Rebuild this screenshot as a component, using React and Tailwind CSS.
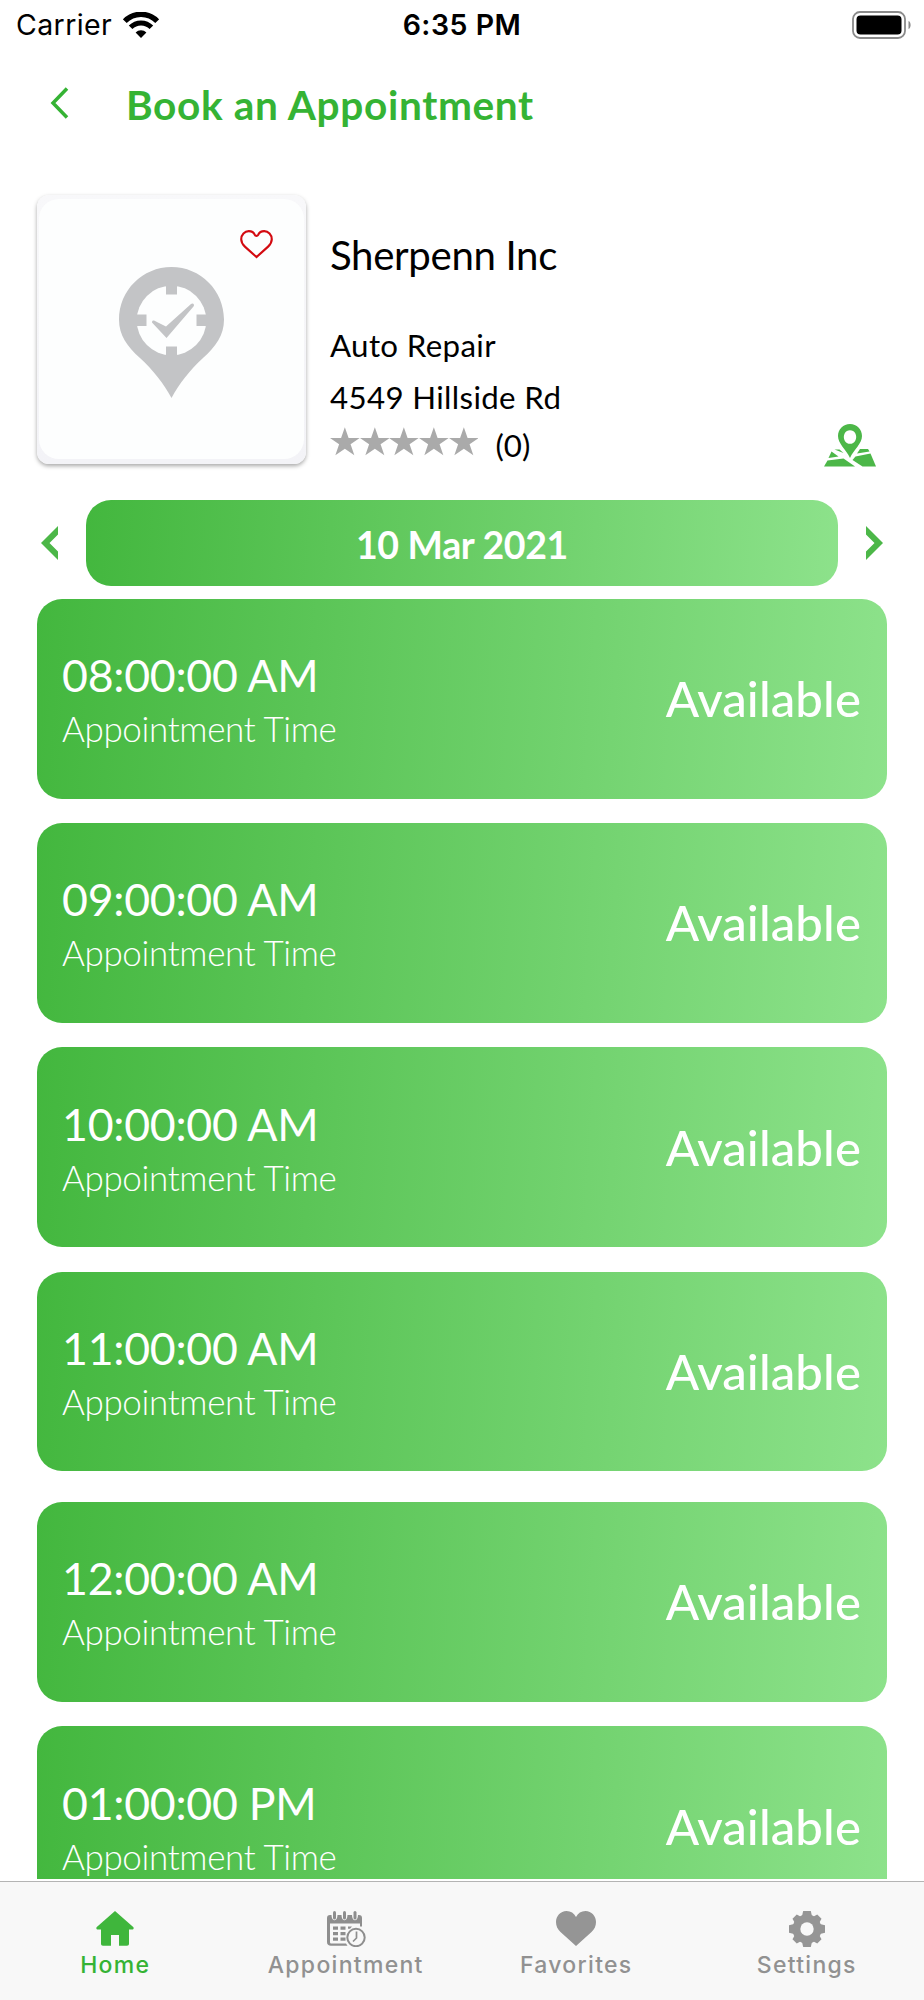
import React from 'react'

const slots = [
    { time: '08:00:00 AM', gap: 'mb-[24.7px]' },
    { time: '09:00:00 AM', gap: 'mb-[24.7px]' },
    { time: '10:00:00 AM', gap: 'mb-[24.7px]' },
    { time: '11:00:00 AM', gap: 'mb-[31px]' },
    { time: '12:00:00 AM', gap: 'mb-[24.7px]' },
    { time: '01:00:00 PM', gap: '' },
]

const WifiIcon = () => (
    <svg className="w-9 h-[27px]" viewBox="0 0 36 27" fill="none" stroke="#000">
        <path d="M1.8 9.2 A22.5 22.5 0 0 1 34.2 9.2" strokeWidth="5.4" />
        <path d="M7.6 15.3 A14.5 14.5 0 0 1 28.4 15.3" strokeWidth="5" />
        <path d="M18 26 L12.6 20.6 A7.6 7.6 0 0 1 23.4 20.6 Z" fill="#000" stroke="none" />
    </svg>
)

const BatteryIcon = () => (
    <svg className="w-[60px] h-7" viewBox="0 0 60 28">
        <rect x="1" y="1" width="52" height="26" rx="7" fill="none" stroke="#8a8a8a" strokeWidth="1.8" />
        <rect x="4.5" y="4.6" width="45" height="18.8" rx="4" fill="#000" />
        <path d="M56.5 10 C59.3 11 59.3 17 56.5 18 Z" fill="#8a8a8a" />
    </svg>
)

const PinLogo = () => (
    <svg className="w-[105px] h-[131px]" viewBox="0 0 105 131">
        <path
            d="M52.5 0 C81.5 0 105 23.5 105 52.5 C105 68 97 79.5 84 91 C71 103 60 117 52.5 131 C45 117 34 103 21 91 C8 79.5 0 68 0 52.5 C0 23.5 23.5 0 52.5 0 Z"
            fill="#c3c4c6"
        />
        <circle cx="52.5" cy="53.5" r="34.8" fill="#fdfefe" />
        <path d="M47 17h11v10.5H47z M47 79.5h11V90H47z M17 47.5h10.5v11.5H17z M77.5 47.5H88v11.5H77.5z" fill="#c3c4c6" />
        <path d="M33 55.5 C33 53 35 53 37 54.5 L47 59.5 L72 37 C74 35.5 76 37.5 74.5 39.5 L47.5 71 Z" fill="#c3c4c6" />
    </svg>
)

const HeartOutline = () => (
    <svg className="w-[33px] h-[29px]" viewBox="0 0 34 30" fill="none" stroke="#d30a10" strokeWidth="2.2">
        <path d="M17 28 L5 17.2 C2.2 14.6 1.2 12.4 1.2 9.6 C1.2 4.8 4.8 1.2 9 1.2 C12.2 1.2 14.2 2.6 15.4 5.2 C16 6.4 18 6.4 18.6 5.2 C19.8 2.6 21.8 1.2 25 1.2 C29.2 1.2 32.8 4.8 32.8 9.6 C32.8 12.4 31.8 14.6 29 17.2 Z" />
    </svg>
)

const Star = () => (
    <svg className="w-[29.7px] h-[28.5px]" viewBox="0 0 30 28.5" fill="#aaaaaa">
        <path d="M15 0 L18.8 11 H30 L20.8 17.4 L24.6 28.5 L15 21.8 L5.4 28.5 L9.2 17.4 L0 11 H11.2 Z" />
    </svg>
)

const MapIcon = () => (
    <svg className="w-[52px] h-[43px]" viewBox="0 0 52 43" fill="#4cb748">
        <path
            fillRule="evenodd"
            d="M26 0 C32.8 0 38 5.2 38 12 C38 20 30 25 26 34 C22 25 14 20 14 12 C14 5.2 19.2 0 26 0 Z M26 6.2 a6.2 6.8 0 1 0 0.01 0 Z"
        />
        <path d="M10.5 25.5 H15.5 L19.5 29 Z" />
        <path d="M7.5 27.5 L14.5 32.5 L4.5 34 Z" />
        <path d="M3.5 36.5 L19.5 34.5 L31 42.5 H0 Z" />
        <path d="M36 25 H44 L45.5 27.5 L33 29.5 Z" />
        <path d="M31.5 32.5 L46.5 29.5 L52 42.5 H38.5 L28.5 36 Z" />
    </svg>
)

const HomeIcon = () => (
    <svg className="w-[38px] h-[35px]" viewBox="0 0 38 35" fill="#3fb63c">
        <path d="M19 0 L37.2 16 C38.2 17.2 37.5 18.5 36 18.5 H33 V32.5 C33 34 32.3 34.7 31 34.7 H23 V24 H15 V34.7 H7 C5.7 34.7 5 34 5 32.5 V18.5 H2 C0.5 18.5 -0.2 17.2 0.8 16 Z" />
    </svg>
)

const CalendarIcon = () => (
    <svg className="w-[39px] h-9 ml-[2px]" viewBox="0 0 39 36" fill="#8e8e8e">
        <path d="M3 4 H4.5 C4.5 11 10.5 11 10.5 4 H14.5 C14.5 11 20.5 11 20.5 4 H25 C25 11 31 11 31 4 H32 C34 4 35 5 35 7 V15.5 H33 V12.5 H3 V31 C3 32 3.5 32.5 4.5 32.5 H19 L20.5 34.7 H4 C1.5 34.7 0 33.5 0 31 V7 C0 5 1 4 3 4 Z" />
        <rect x="6" y="0" width="3" height="8.5" rx="1.5" />
        <rect x="16" y="0" width="3" height="8.5" rx="1.5" />
        <rect x="26.5" y="0" width="3" height="8.5" rx="1.5" />
        <path d="M6 15.5h5v3.3H6z M13.5 15.5h5v3.3h-5z M21 15.5h4l-2 2.3h-2z M6 21h5v3.3H6z M13.5 21h5v3.3h-5z M6 26.5h5v3.3H6z M13.5 26.5h5v3.3h-5z" />
        <circle cx="29" cy="26.5" r="8.7" fill="none" stroke="#8e8e8e" strokeWidth="2" />
        <path d="M29.5 20.5 V27 L26 30.5" fill="none" stroke="#8e8e8e" strokeWidth="1.7" />
    </svg>
)

const HeartIcon = () => (
    <svg className="w-10 h-[35px]" viewBox="0 0 40 35" fill="#959595">
        <path d="M20 35 L4.5 21 C1.5 18 0 15 0 11 C0 5 4.5 0 10.5 0 C14.8 0 18 2.2 20 6 C22 2.2 25.2 0 29.5 0 C35.5 0 40 5 40 11 C40 15 38.5 18 35.5 21 Z" />
    </svg>
)

const GearIcon = () => (
    <svg className="w-9 h-9" viewBox="0 0 36 36">
        <g fill="#959595">
            <circle cx="18" cy="18" r="14.5" />
            <path d="M14.2 0h7.6l1.2 5v26l-1.2 5h-7.6l-1.2-5V5z" />
            <path d="M14.2 0h7.6l1.2 5v26l-1.2 5h-7.6l-1.2-5V5z" transform="rotate(90 18 18)" />
            <path d="M15 0.5h6l1.5 5v25l-1.5 5h-6l-1.5-5v-25z" transform="rotate(45 18 18)" />
            <path d="M15 0.5h6l1.5 5v25l-1.5 5h-6l-1.5-5v-25z" transform="rotate(135 18 18)" />
        </g>
        <circle cx="18" cy="18" r="6.7" fill="#f8f8f8" />
    </svg>
)

const SlotCard = ({ time, gap }) => (
    <div
        className={`flex shrink-0 items-center justify-between h-[199.5px] rounded-[25px] pl-[25px] pr-[26px] text-white bg-linear-[94deg,#43b73e,#8de28b] ${gap}`}
    >
        <div className="flex flex-col pt-[5px]">
            <span className="text-[44.64px] leading-[54px] tracking-[-0.25px]">{time}</span>
            <span className="text-[35px] leading-[52px] tracking-[-0.35px] font-light">Appointment Time</span>
        </div>
        <span className="pb-px text-[49.1px] leading-[60px] font-medium tracking-[0.1px]">Available</span>
    </div>
)

const Tab = ({ icon, label, active }) => (
    <div className="flex flex-1 flex-col items-center pt-[29px]">
        <div className="h-[36px]">{icon}</div>
        <span
            className={`mt-[3px] font-[Inter,sans-serif] text-[23px] leading-[30px] font-medium tracking-[1.3px] ${active ? 'text-[#35b334]' : 'text-[#919191]'}`}
        >
            {label}
        </span>
    </div>
)

const App = () => {
    return (
        <div className="flex flex-col w-[924px] h-[2000px] overflow-hidden bg-white text-black font-[Lato,sans-serif]">
            <div className="grid grid-cols-3 items-center h-[50px] font-[Inter,sans-serif] text-[28.5px]">
                <div className="flex items-center gap-[11px] pl-4">
                    <span className="tracking-[0.4px]">Carrier</span>
                    <WifiIcon />
                </div>
                <span className="text-center font-semibold tracking-[0.5px]">6:35 PM</span>
                <div className="flex justify-end pr-3">
                    <BatteryIcon />
                </div>
            </div>

            <div className="flex items-center h-28 pl-[50px]">
                <svg className="w-[19px] h-8 mb-[6px]" viewBox="0 0 19 32" fill="none" stroke="#35b334" strokeWidth="3.5">
                    <path d="M17 1.5 L3 16 L17 30.5" />
                </svg>
                <h1 className="ml-[57px] mb-[2px] text-[40.6px] font-bold tracking-[0.65px] text-[#35b334]">Book an Appointment</h1>
            </div>

            <div className="flex shrink-0 h-[338px] pt-[33px] pl-[37px] pr-[48px]">
                <div className="w-[269px] h-[269px] rounded-[12px] bg-linear-to-b from-[#f8f8fa] to-[#f3f3f7] pt-[4px] px-[2px] shadow-[0_2px_4px_rgba(0,0,0,0.35)]">
                    <div className="relative flex justify-center h-[260px] pt-[68px] rounded-[20px] bg-[#fdfefe]">
                        <PinLogo />
                        <div className="absolute top-[31px] right-[31px]">
                            <HeartOutline />
                        </div>
                    </div>
                </div>
                <div className="flex flex-col ml-[24px] text-[31.25px]">
                    <h2 className="mt-[35px] text-[40.2px] leading-[50px] tracking-[-0.35px]">Sherpenn Inc</h2>
                    <span className="mt-[39px] leading-[52px] tracking-[0.35px]">Auto Repair</span>
                    <span className="leading-[52px] tracking-[0.35px]">4549 Hillside Rd</span>
                    <div className="flex items-start h-[42px] pt-[4px]">
                        <Star />
                        <Star />
                        <Star />
                        <Star />
                        <Star />
                        <span className="ml-[17px] leading-[36px]">(0)</span>
                    </div>
                </div>
                <div className="ml-auto mt-[229px]">
                    <MapIcon />
                </div>
            </div>

            <div className="flex shrink-0 items-center justify-between h-[86px] mb-[13px] px-[41px]">
                <svg className="w-[17px] h-[34px]" viewBox="0 0 17 34" fill="#4cb748">
                    <path d="M17 0 V8.5 L8.5 17 L17 25.5 V34 L0 17 Z" />
                </svg>
                <div className="flex items-center justify-center w-[752px] h-full pt-[4px] rounded-[25px] bg-linear-[94deg,#43b73e,#8de28b] text-white text-[37.5px] font-bold tracking-[-0.35px]">
                    10 Mar 2021
                </div>
                <svg className="w-[17px] h-[34px]" viewBox="0 0 17 34" fill="#4cb748">
                    <path d="M0 0 V8.5 L8.5 17 L0 25.5 V34 L17 17 Z" />
                </svg>
            </div>

            <div className="flex flex-col h-[1280px] px-[37px] overflow-hidden">
                {slots.map((slot) => (
                    <SlotCard key={slot.time} time={slot.time} gap={slot.gap} />
                ))}
            </div>

            <div className="flex shrink-0 mt-[2px] h-[119px] pr-[2px] border-t border-[#b4b4b4] bg-[#f8f8f8]">
                <Tab icon={<HomeIcon />} label="Home" active />
                <Tab icon={<CalendarIcon />} label="Appointment" />
                <Tab icon={<HeartIcon />} label="Favorites" />
                <Tab icon={<GearIcon />} label="Settings" />
            </div>
        </div>
    )
}

export default App
